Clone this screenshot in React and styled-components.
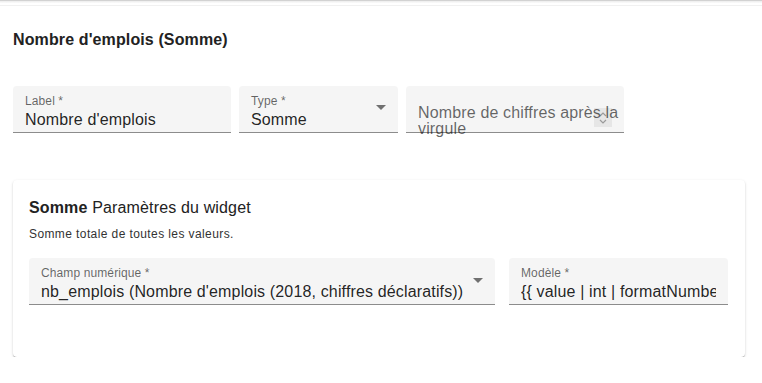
import React from "react";
import styled, { createGlobalStyle } from "styled-components";

const GlobalStyle = createGlobalStyle`
  body {
    margin: 0;
    background: #fff;
    font-family: "Liberation Sans", Arial, sans-serif;
    color: rgba(0, 0, 0, 0.87);
  }
`;

const TopEdge = styled.div`
  height: 6px;
  box-sizing: border-box;
  border-top: 1px solid #d2d2d2;
  border-bottom: 1px solid #f1f1f1;
  background: linear-gradient(#ececec, #fff 60%);
`;

const Page = styled.div`
  padding: 22px 17px 0 13px;
`;

const Title = styled.h2`
  margin: 0;
  font-size: 16px;
  line-height: 24px;
  font-weight: 700;
  letter-spacing: 0.0075em;
  color: #222;
`;

const Row = styled.div`
  display: flex;
  gap: ${({ gap }) => gap || 8}px;
  margin-top: ${({ top }) => top || 0}px;
`;

const Field = styled.div`
  position: relative;
  width: ${({ w }) => w}px;
  height: 47px;
  box-sizing: border-box;
  display: flex;
  align-items: center;
  padding: 0 12px;
  background: #f5f5f5;
  border-radius: 4px 4px 0 0;
  border-bottom: 1px solid #8c8c8c;
`;

const FieldBody = styled.div`
  flex: 1;
  min-width: 0;
  display: flex;
  flex-direction: column;
  align-self: stretch;
  padding-top: 8px;
`;

const SmallLabel = styled.span`
  font-size: 12px;
  line-height: 14px;
  letter-spacing: 0.00938em;
  color: rgba(0, 0, 0, 0.6);
  height: 14px;
`;

const Value = styled.span`
  margin-top: 2px;
  font-size: 16px;
  line-height: 19px;
  letter-spacing: 0.00938em;
  white-space: nowrap;
  overflow: hidden;
  color: rgba(0, 0, 0, 0.87);
`;

const InputRow = styled.div`
  height: 19px;
  display: flex;
  justify-content: flex-end;
`;

const Spinner = styled.div`
  width: 18px;
  height: 19px;
  background: #e6e6e6;
  display: flex;
  flex-direction: column;
  align-items: center;
  justify-content: center;
`;

const FloatingLabel = styled.span`
  position: absolute;
  left: 12px;
  right: 0;
  top: 19px;
  font-size: 16px;
  line-height: 16px;
  letter-spacing: 0.00938em;
  color: rgba(0, 0, 0, 0.6);
`;

const Arrow = styled.span`
  width: 0;
  height: 0;
  margin-left: 8px;
  margin-top: ${({ dy }) => dy || -2}px;
  border-left: 5px solid transparent;
  border-right: 5px solid transparent;
  border-top: 5px solid rgba(0, 0, 0, 0.54);
`;

const Card = styled.section`
  margin-top: 47px;
  border-radius: 4px;
  background: #fff;
  padding: 16px 16px 52px;
  box-shadow: 0 2px 1px -1px rgba(0, 0, 0, 0.22), 0 1px 1px 0 rgba(0, 0, 0, 0.16),
    0 1px 3px 0 rgba(0, 0, 0, 0.14);
`;

const CardTitle = styled.h3`
  margin: 0;
  font-size: 16px;
  line-height: 24px;
  font-weight: 400;
  letter-spacing: 0.00938em;
  color: #222;
  b {
    font-weight: 700;
  }
`;

const Description = styled.p`
  margin: 6px 0 0;
  font-size: 12px;
  line-height: 17px;
  letter-spacing: 0.03333em;
  color: #333;
`;

function Chevrons() {
  return (
    <svg width="10" height="14" viewBox="0 0 10 14">
      <path d="M2 5 L5 2 L8 5" fill="none" stroke="#9a9a9a" strokeWidth="1.2" />
      <path d="M2 9 L5 12 L8 9" fill="none" stroke="#9a9a9a" strokeWidth="1.2" />
    </svg>
  );
}

function TextField({ label, value, w, select, arrowDy }) {
  return (
    <Field w={w}>
      <FieldBody>
        <SmallLabel>{label}</SmallLabel>
        <Value>{value}</Value>
      </FieldBody>
      {select && <Arrow dy={arrowDy} />}
    </Field>
  );
}

export default function App() {
  return (
    <>
      <GlobalStyle />
      <TopEdge />
      <Page>
        <Title>Nombre d'emplois (Somme)</Title>
        <Row top={34}>
          <TextField w={218} label="Label *" value="Nombre d'emplois" />
          <TextField w={159} label="Type *" value="Somme" select arrowDy={-3} />
          <Field w={218}>
            <FieldBody>
              <SmallLabel />
              <InputRow>
                <Spinner>
                  <Chevrons />
                </Spinner>
              </InputRow>
            </FieldBody>
            <FloatingLabel>Nombre de chiffres après la virgule</FloatingLabel>
          </Field>
        </Row>
        <Card>
          <CardTitle>
            <b>Somme</b> Paramètres du widget
          </CardTitle>
          <Description>Somme totale de toutes les valeurs.</Description>
          <Row gap={14} top={15}>
            <TextField
              w={466}
              label="Champ numérique *"
              value="nb_emplois (Nombre d'emplois (2018, chiffres déclaratifs))"
              select
              arrowDy={-1}
            />
            <TextField
              w={219}
              label="Modèle *"
              value="{{ value | int | formatNumber }}"
            />
          </Row>
        </Card>
      </Page>
    </>
  );
}
